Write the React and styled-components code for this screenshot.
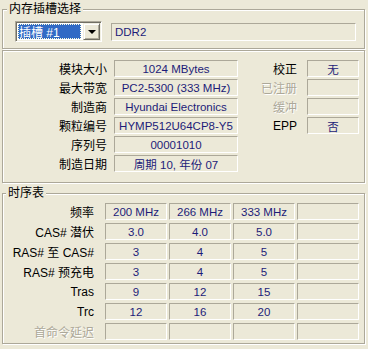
import React from 'react';
import styled, { createGlobalStyle } from 'styled-components';

const GlobalStyle = createGlobalStyle`
  html, body {
    margin: 0;
    padding: 0;
    background: #ece9d8;
  }
  body {
    font-family: "Liberation Sans", "Noto Sans CJK SC", sans-serif;
    font-size: 12px;
    color: #000;
  }
`;

const Window = styled.div`
  width: 368px;
  height: 349px;
  box-sizing: border-box;
  padding: 2px 0 0 2px;
  background: #ece9d8;
  display: flex;
  flex-direction: column;
`;

const Group = styled.fieldset`
  margin: ${p => p.$top || 0}px 0 0 0;
  padding: 0;
  width: 363px;
  box-sizing: border-box;
  min-inline-size: 0;
  border: 1px solid #aca899;
  box-shadow: inset 1px 1px 0 #fff, 1px 1px 0 #fff;
`;

const Legend = styled.legend`
  margin-left: ${p => p.$offset || 4}px;
  padding: 0 2px;
  line-height: 14px;
  background: #ece9d8;
`;

const Frame = styled.div`
  margin-top: 1px;
  width: 363px;
  box-sizing: border-box;
  border: 1px solid #aca899;
  box-shadow: inset 1px 1px 0 #fff, 1px 1px 0 #fff;
  padding: 9px 0 10px 0;
  display: grid;
  grid-template-columns: 111px 124px 69px 52px;
  grid-auto-rows: 17px;
  row-gap: 2px;
`;

const SlotRow = styled.div`
  display: flex;
  align-items: center;
  gap: 9px;
  padding: 5px 0 6px 12px;
`;

const Combo = styled.div`
  width: 87px;
  height: 21px;
  box-sizing: border-box;
  display: flex;
  align-items: stretch;
  background: #fff;
  border: 1px solid;
  border-color: #aca899 #fff #fff #aca899;
  box-shadow: inset 1px 1px 0 #716f64, inset -1px -1px 0 #f1efe2;
  padding: 1px;
`;

const Selected = styled.div`
  flex: 1;
  margin: 1px 2px 1px 1px;
  padding-left: 1px;
  background: #316ac5;
  color: #fff;
  outline: 1px dotted #ffd;
  outline-offset: -1px;
  display: flex;
  align-items: center;
  white-space: nowrap;
`;

const DropButton = styled.div`
  width: 17px;
  box-sizing: border-box;
  background: #ece9d8;
  border: 1px solid;
  border-color: #f1efe2 #716f64 #716f64 #f1efe2;
  box-shadow: inset 1px 1px 0 #fff, inset -1px -1px 0 #aca899;
  display: flex;
  align-items: center;
  justify-content: center;

  &::after {
    content: '';
    width: 0;
    height: 0;
    border-left: 4px solid transparent;
    border-right: 4px solid transparent;
    border-top: 4px solid #000;
  }
`;

const Field = styled.div`
  box-sizing: border-box;
  width: ${p => (p.$w ? `${p.$w}px` : 'auto')};
  height: ${p => p.$h || 17}px;
  border: 1px solid;
  border-color: #aca899 #fff #fff #aca899;
  color: #1c1c78;
  font-size: 11.5px;
  display: flex;
  align-items: center;
  justify-content: ${p => (p.$left ? 'flex-start' : 'center')};
  padding: 1px 3px 0;
  white-space: nowrap;
  overflow: hidden;
`;

const Label = styled.div`
  display: flex;
  align-items: center;
  justify-content: flex-end;
  padding-right: ${p => p.$pad || 7}px;
  white-space: nowrap;
  color: ${p => (p.$off ? '#aca899' : '#000')};
  text-shadow: ${p => (p.$off ? '1px 1px 0 #fff' : 'none')};
`;

const Timing = styled.div`
  display: grid;
  grid-template-columns: 100px repeat(4, 62px);
  grid-auto-rows: 17px;
  column-gap: 2px;
  row-gap: 3px;
  padding: 3px 0 3px 0;
`;

const spd = [
  { label: '模块大小', value: '1024 MBytes', side: { label: '校正', value: '无' } },
  { label: '最大带宽', value: 'PC2-5300 (333 MHz)', side: { label: '已注册', value: '', off: true } },
  { label: '制造商', value: 'Hyundai Electronics', side: { label: '缓冲', value: '', off: true } },
  { label: '颗粒编号', value: 'HYMP512U64CP8-Y5', side: { label: 'EPP', value: '否' } },
  { label: '序列号', value: '00001010' },
  { label: '制造日期', value: '周期 10, 年份 07' },
];

const timings = [
  { label: '频率', values: ['200 MHz', '266 MHz', '333 MHz', ''] },
  { label: 'CAS# 潜伏', values: ['3.0', '4.0', '5.0', ''] },
  { label: 'RAS# 至 CAS#', values: ['3', '4', '5', ''] },
  { label: 'RAS# 预充电', values: ['3', '4', '5', ''] },
  { label: 'Tras', values: ['9', '12', '15', ''] },
  { label: 'Trc', values: ['12', '16', '20', ''] },
  { label: '首命令延迟', values: ['', '', '', ''], off: true },
];

export default function App() {
  return (
    <>
      <GlobalStyle />
      <Window>
        <Group>
          <Legend $offset={4}>内存插槽选择</Legend>
          <SlotRow>
            <Combo>
              <Selected>插槽 #1</Selected>
              <DropButton />
            </Combo>
            <Field $w={245} $h={18} $left>DDR2</Field>
          </SlotRow>
        </Group>

        <Frame>
          {spd.map(row => (
            <React.Fragment key={row.label}>
              <Label>{row.label}</Label>
              <Field>{row.value}</Field>
              {row.side ? (
                <>
                  <Label $pad={10} $off={row.side.off}>{row.side.label}</Label>
                  <Field>{row.side.value}</Field>
                </>
              ) : (
                <>
                  <span />
                  <span />
                </>
              )}
            </React.Fragment>
          ))}
        </Frame>

        <Group $top={3}>
          <Legend $offset={3}>时序表</Legend>
          <Timing>
            {timings.map(row => (
              <React.Fragment key={row.label}>
                <Label $pad={9} $off={row.off}>{row.label}</Label>
                {row.values.map((v, i) => (
                  <Field key={i}>{v}</Field>
                ))}
              </React.Fragment>
            ))}
          </Timing>
        </Group>
      </Window>
    </>
  );
}
